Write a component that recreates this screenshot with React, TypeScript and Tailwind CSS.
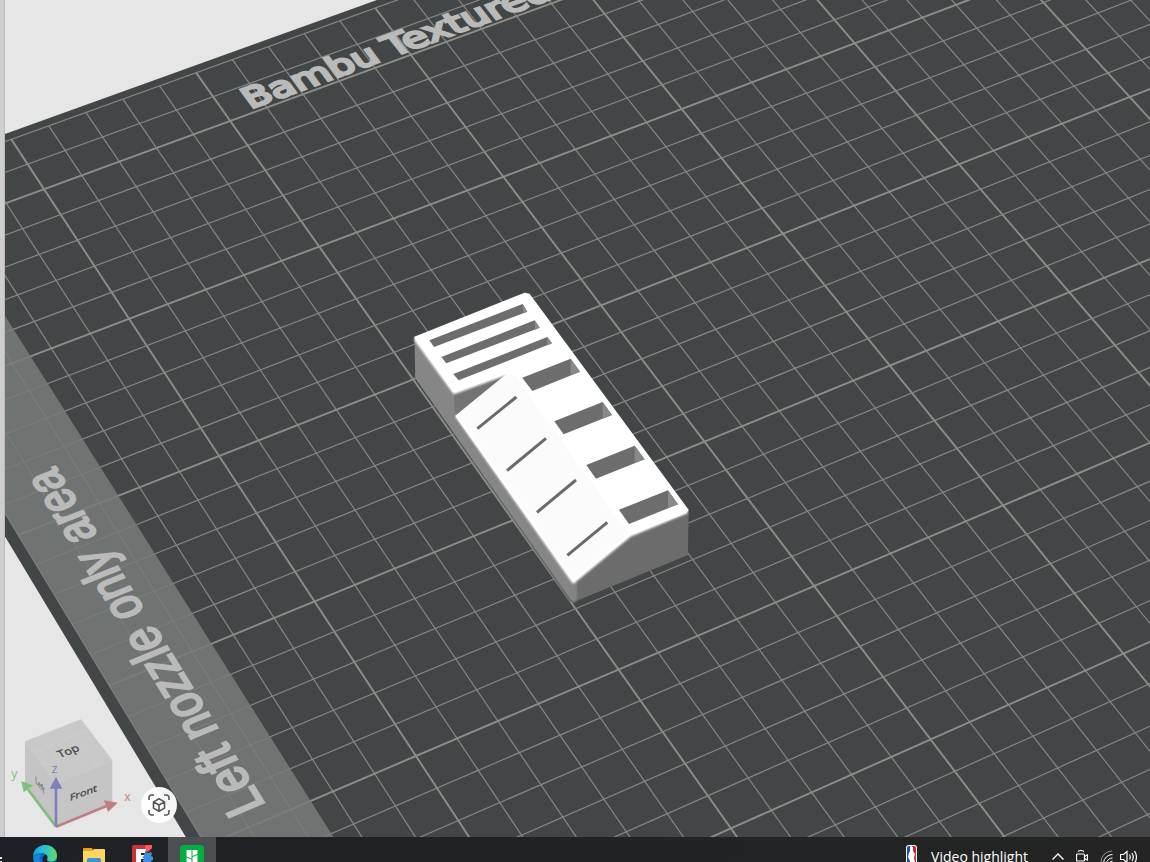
import React from "react";

type Point = [number, number];

// bed cell (x, y) -> screen, seen through the current camera
const project = (x: number, y: number): Point => {
  const w = 1 + 0.0032 * x - 0.00561 * y;
  return [
    (38.436 * x + 16.485 * y + 319.2) / w,
    (-13.417 * x + 24.44 * y + 246.6) / w,
  ];
};

const quad = (x1: number, y1: number, x2: number, y2: number) =>
  [project(x1, y1), project(x2, y1), project(x2, y2), project(x1, y2)]
    .map((p) => p.join(","))
    .join(" ");

const BED = { left: -10, right: 36, top: -7, bottom: 36 };

const range = (from: number, to: number) =>
  Array.from({ length: to - from + 1 }, (_, i) => from + i);

const GridLine = ({ from, to, major }: { from: Point; to: Point; major: boolean }) => (
  <line
    x1={from[0]}
    y1={from[1]}
    x2={to[0]}
    y2={to[1]}
    stroke={major ? "#8b8e8b" : "#858886"}
    strokeWidth={major ? 1.9 : 1.2}
  />
);

const Grid = () => (
  <g>
    {range(BED.left, BED.right).map((x) => (
      <GridLine
        key={`x${x}`}
        from={project(x, BED.top)}
        to={project(x, BED.bottom)}
        major={x % 5 === 0 && x !== BED.left}
      />
    ))}
    {range(BED.top, BED.bottom).map((y) => (
      <GridLine
        key={`y${y}`}
        from={project(BED.left, y)}
        to={project(BED.right, y)}
        major={y % 5 === 0}
      />
    ))}
  </g>
);

// A word lying on the bed, "side" words run along the left edge
const BedText = ({
  text,
  x,
  y,
  size,
  length,
  weight,
  side = false,
  family,
}: {
  text: string;
  x: number;
  y: number;
  size: number;
  length: number;
  weight: number;
  side?: boolean;
  family: string;
}) => {
  const o = project(x, y);
  const along = side ? project(x, y - length) : project(x + length, y);
  const down = side ? project(x + 1, y - length / 2) : project(x + length / 2, y + 1);
  const mid = side ? project(x, y - length / 2) : project(x + length / 2, y);
  const k = 100 * length;
  const matrix = [
    (along[0] - o[0]) / k,
    (along[1] - o[1]) / k,
    (down[0] - mid[0]) / 100,
    (down[1] - mid[1]) / 100,
    o[0],
    o[1],
  ];
  return (
    <text
      transform={`matrix(${matrix.join(" ")})`}
      fontSize={size * 100}
      fontFamily={family}
      fill="#b9bab9"
      stroke="#b9bab9"
      strokeWidth={weight}
    >
      {text}
    </text>
  );
};

const nameWords = [
  { text: "Bambu", x: 0.62, length: 3.6, size: 1.03 },
  { text: "Textured", x: 4.56, length: 4.9, size: 1.08 },
];

const nozzleWords = [
  { text: "Left", y: 14.65, length: 2 },
  { text: "nozzle", y: 12.3, length: 3.4 },
  { text: "only", y: 8.45, length: 2.2 },
  { text: "area", y: 5.88, length: 2.4 },
];

const longSlots = [
  { hole: "88,181 368,72 382,95 102,201", wall: "368,72 382,95 370,99" },
  { hole: "124,231 404,121 419,143 139,250", wall: "404,121 419,143 405,149" },
  { hole: "160,282 442,171 456,190 176,301", wall: "442,171 456,190 442,196" },
];

const shortSlots = [
  { hole: "367,293 512,236 540,275 397,333", wall: "512,236 540,275 512,286" },
  { hole: "463,424 608,366 636,405 491,463", wall: "608,366 636,405 608,416" },
  { hole: "559,555 704,497 734,538 588,596", wall: "704,497 734,538 704,549" },
  { hole: "657,689 804,631 834,673 687,732", wall: "804,631 834,673 804,684" },
];

const slits = [
  [232, 446, 349, 351],
  [321, 572, 438, 475],
  [411, 697, 528, 600],
  [502, 826, 622, 727],
];

const Model = () => (
  <g transform="translate(400 280) scale(0.3333)" strokeLinejoin="round">
    <defs>
      <linearGradient id="notch" x1="0" y1="0" x2="0.3" y2="1">
        <stop offset="0" stopColor="#8c8c8c" />
        <stop offset="0.35" stopColor="#717171" />
        <stop offset="1" stopColor="#767676" />
      </linearGradient>
      <filter id="round-edge" x="-10%" y="-10%" width="120%" height="120%">
        <feGaussianBlur stdDeviation="3" />
      </filter>
    </defs>
    <polygon points="43,290 48,270 526,940 522,972 508,962" fill="#666968" />
    <polygon points="43,172 165,335 168,395 525,900 523,966 510,955 50,300 46,288" fill="#868686" />
    <polygon points="520,900 690,760 866,690 864,825 522,966" fill="#6c6c6c" />
    <polygon points="514,900 530,895 532,961 522,966 512,956" fill="#838383" filter="url(#round-edge)" />
    <polygon points="162,335 325,278 330,290 170,406 163,392" fill="url(#notch)" />
    <polygon points="325,280 350,280 690,764 520,904 168,408" fill="#fbfbfb" stroke="#fbfbfb" strokeWidth="4" />
    <polygon
      points="46,172 375,41 387,44 863,690 858,696 690,763 345,282 322,278 166,334 160,332"
      fill="#fff"
      stroke="#fff"
      strokeWidth="6"
    />
    <g fill="none" stroke="#fff" strokeWidth="9" filter="url(#round-edge)">
      <polyline points="45,176 163,338 322,280" />
      <polyline points="170,408 520,906 690,766 862,695" />
    </g>
    {[...longSlots, ...shortSlots].map((slot) => (
      <g key={slot.hole}>
        <polygon points={slot.hole} fill="#6d6d6d" />
        <polygon points={slot.wall} fill="#898989" />
      </g>
    ))}
    {slits.map(([x1, y1, x2, y2]) => (
      <line key={x1} x1={x1} y1={y1} x2={x2} y2={y2} stroke="#6a6a6a" strokeWidth="9" />
    ))}
  </g>
);

const Scene = () => (
  <svg
    className="block size-full"
    viewBox="5 0 1145 837"
    preserveAspectRatio="xMinYMax slice"
    role="img"
    aria-label="Build plate"
  >
    <polygon points={quad(-10.28, -7.25, 37, 37)} fill="#434646" />
    <Grid />
    <polygon points={quad(BED.left, BED.top, -7.53, BED.bottom)} fill="#777a79" fillOpacity="0.86" />
    {nameWords.map((w) => (
      <BedText key={w.text} {...w} y={-5.15} weight={9} family="'DejaVu Sans', sans-serif" />
    ))}
    {nozzleWords.map((w) => (
      <BedText
        key={w.text}
        {...w}
        x={-8.43}
        size={1.2}
        weight={6}
        side
        family="'Liberation Sans', Arial, sans-serif"
      />
    ))}
    <Model />
  </svg>
);

const ViewCube = () => (
  <svg
    className="absolute bottom-0 left-0 h-[137px] w-[140px]"
    viewBox="0 0 420 411"
    fontFamily="'Open Sans', sans-serif"
  >
    <polygon points="75,124 243,58 337,181 168,250" fill="#c8c8c8" />
    <polygon points="75,124 168,250 168,380 75,256" fill="#c4c4c4" />
    <polygon points="168,250 337,181 337,310 168,380" fill="#c5c5c5" />
    <path
      d="M120 108L210 228M206 76L294 196M98 156L262 92M128 192L290 134"
      stroke="#d0d0d0"
      strokeWidth="2"
      fill="none"
    />
    <text transform="matrix(1.02 -0.38 0.5 0.8 180 174)" fontSize="34" fill="#444" stroke="#444">
      Top
    </text>
    <text transform="matrix(1.08 -0.4 0 0.9 210 303)" fontSize="30" fill="#444" stroke="#444">
      Front
    </text>
    <text transform="matrix(0.55 0.75 0 1 106 246)" fontSize="28" fill="#444">
      Left
    </text>
    <g strokeWidth="8">
      <path d="M168 380L320 318" stroke="#bf7f7f" />
      <path d="M168 380L84 268" stroke="#80bf80" />
      <path d="M168 380V260" stroke="#8080bf" />
    </g>
    <polygon points="312,301 353,308 324,336" fill="#bf7f7f" />
    <polygon points="64,244 100,256 71,277" fill="#80bf80" />
    <polygon points="168,230 187,266 149,266" fill="#8080bf" />
    <text x="373" y="303" fontSize="37" fill="#c98080">
      x
    </text>
    <text x="34" y="235" fontSize="37" fill="#80c080">
      y
    </text>
    <text x="155" y="219" fontSize="37" fill="#8080c0">
      z
    </text>
  </svg>
);

const FitIcon = () => (
  <svg className="size-[22px]" viewBox="0 0 22 22" fill="none" stroke="#555" strokeWidth="1.6" strokeLinejoin="round">
    <path d="M1 6V3.5A2.500 2.500 0 0 1 3.500 1H6M16 1h2.500A2.500 2.500 0 0 1 21 3.500V6M21 16v2.500a2.500 2.500 0 0 1-2.500 2.500H16M6 21H3.500A2.500 2.500 0 0 1 1 18.500V16" />
    <path d="M11 4.800l5.500 3.100v6.200L11 17.200l-5.500-3.100V7.900zM5.500 7.900L11 11l5.500-3.100M11 11v6.200" />
  </svg>
);

const EdgeIcon = () => (
  <svg className="size-6" viewBox="0 0 24 24">
    <defs>
      <linearGradient id="edge-top" x1="0" y1="0.3" x2="1" y2="0.4">
        <stop offset="0" stopColor="#1b9de2" />
        <stop offset="0.5" stopColor="#2cc3d0" />
        <stop offset="1" stopColor="#62dc5c" />
      </linearGradient>
    </defs>
    <circle cx="12" cy="12" r="12" fill="#0f6cbd" />
    <path d="M0 11.500C.4 5 5.500 0 12 0c7 0 12 5 12 10.500 0 4-3 6-6.500 6-2.800 0-4-1-3.500-2 1-2 .5-6.500-5-6.500-4.500 0-8 1.500-9 3.500z" fill="url(#edge-top)" />
    <path d="M9 8.500C6 10 5.500 15 8 19c2 3 5 4 8 4-6 2.500-14-1-15.500-8C1 10 5 8 9 8.500z" fill="#1385d8" />
    <path d="M14 14.500c.8-1.600.6-4-1-5-2.500.5-4 3-3.500 6 1 2.500 3 4 6 4 3 0 5-1 6.500-2.500-3 1-7.500.5-8-2.500z" fill="#1d2125" />
  </svg>
);

const FolderIcon = () => (
  <svg className="size-[22px]" viewBox="0 0 22 22">
    <path d="M0 1a1 1 0 0 1 1-1h8l1 2h11v6H0z" fill="#e5a50f" />
    <path d="M0 3h9l2-2h10a1 1 0 0 1 1 1v16H0z" fill="#fcd462" />
    <path d="M4 18v-6a2 2 0 0 1 2-2h10a2 2 0 0 1 2 2v6z" fill="#3a92dc" />
    <path d="M8 14h6v4H8z" fill="#fcd462" />
  </svg>
);

const CadIcon = () => (
  <svg className="size-[22px]" viewBox="0 0 22 22">
    <path d="M2 0h18v3l-3 4H8v15H0V2a2 2 0 0 1 2-2z" fill="#cb333b" />
    <path d="M14 0h6v3l-4 3h-4z" fill="#ff585d" />
    <path d="M4 4h10l-1 4H9v2h4v4H9v8H4z" fill="#fff" />
    <path d="M12 9l2-2 2 1 3-1 1 2-1 2 2 1v3l-2 1 1 2-2 2h-6v-3l-2-1 2-2-2-2 2-1z" fill="#418fde" />
  </svg>
);

const SlicerIcon = () => (
  <svg className="size-6" viewBox="0 0 24 24">
    <rect width="24" height="24" rx="4" fill="#00ae42" />
    <path d="M6.500 5h5v8.500l-5-2zM12.500 5h5v4l-5 2zM6.500 12.500l5 2V20h-5zM12.500 12l5-2v10h-5z" fill="#fff" />
  </svg>
);

const NbaIcon = () => (
  <svg className="h-6 w-[11px]" viewBox="0 0 11 24">
    <rect width="11" height="24" rx="3" fill="#fff" />
    <rect x="1" y="1" width="5" height="22" rx="2" fill="#1d4fa8" />
    <rect x="5" y="1" width="5" height="22" rx="2" fill="#d3202f" />
    <path d="M4 1l3 1v4l2 3-1 4 1 4-3 4-3 1 1-6-2-4 1-4 1-2z" fill="#fff" />
  </svg>
);

const apps = [
  { name: "Microsoft Edge", icon: <EdgeIcon />, pad: "pt-2" },
  { name: "File Explorer", icon: <FolderIcon />, pad: "pt-[11px]" },
  { name: "CAD", icon: <CadIcon />, pad: "pt-2" },
  { name: "Bambu Studio", icon: <SlicerIcon />, pad: "pt-2", active: true },
];

const Taskbar = () => (
  <footer className="flex h-[25px] shrink-0 items-start justify-between overflow-hidden bg-linear-to-r from-[#1d2125] to-[#242424]">
    <nav className="flex">
      <button aria-label="Task view" className="w-[21px] pt-3">
        <svg className="h-[14px] w-[3px]" viewBox="0 0 3 14" fill="#e8e8e8">
          <path d="M0 1h2v2H0zM0 5h2v2H0z" />
          <path d="M0 9h2v5H0z" fill="#999" />
        </svg>
      </button>
      {apps.map((app) => (
        <button
          key={app.name}
          aria-label={app.name}
          className={`mr-px flex h-10 w-12 items-start justify-center ${app.pad} ${app.active ? "bg-[#4c4f52]" : ""}`}
        >
          {app.icon}
        </button>
      ))}
    </nav>
    <div className="flex h-10 items-center pr-3 text-white">
      <button className="flex items-center gap-[14px] font-['Open_Sans',sans-serif] text-sm">
        <NbaIcon />
        Video highlight
      </button>
      <button aria-label="Show hidden icons" className="ml-6">
        <svg className="h-4 w-3" viewBox="0 0 12 16" fill="none" stroke="#fff" strokeWidth="1.300">
          <path d="M.5 10.500L6 5l5.500 5.500" />
        </svg>
      </button>
      <button aria-label="Meet now" className="ml-3">
        <svg className="h-4 w-3" viewBox="0 0 12 16" fill="none" stroke="#fff" strokeWidth="1.200">
          <path d="M2 2.500Q5 .5 8 2.500M1.500 5h6a1 1 0 0 1 1 1v5a1 1 0 0 1-1 1h-6a1 1 0 0 1-1-1V6a1 1 0 0 1 1-1zM8.500 7.500L11.500 6v5l-3-1.500M2 14.500q3 1.500 6 0" />
        </svg>
      </button>
      <button aria-label="Network" className="ml-3">
        <svg className="size-[14px]" viewBox="0 0 14 14" fill="none" stroke="#fff">
          <path d="M1 12A11 11 0 0 1 12 1" opacity="0.5" />
          <path d="M3.500 13A9 9 0 0 1 12.500 4.500M6.500 13.500a6 6 0 0 1 6-5.500M9.500 13.500a3 3 0 0 1 3-2.500" />
        </svg>
      </button>
      <button aria-label="Volume" className="ml-1.5">
        <svg className="h-[14px] w-[18px]" viewBox="0 0 18 14" fill="none" stroke="#fff" strokeWidth="1.200">
          <path d="M.5 4.500h3L7 1.500v11L3.500 9.500h-3zM9.500 4.500q1.500 2.500 0 5M12 3q2.500 4 0 8M14.500 1q4 6 0 12" />
        </svg>
      </button>
    </div>
  </footer>
);

const App = () => {
  return (
    <div className="flex h-screen flex-col bg-[#e6e6e6]">
      <main className="flex min-h-0 flex-1">
        <aside className="w-[5px] shrink-0 border-r border-[#b9b9b9] bg-[#cecece]" />
        <section className="relative min-w-0 flex-1">
          <Scene />
          <div className="absolute bottom-0 -left-[5px]">
            <ViewCube />
          </div>
          <button
            aria-label="Fit camera to scene"
            className="absolute bottom-[14px] left-[136px] flex size-9 items-center justify-center rounded-full bg-white/95"
          >
            <FitIcon />
          </button>
        </section>
      </main>
      <Taskbar />
    </div>
  );
};

export default App;
